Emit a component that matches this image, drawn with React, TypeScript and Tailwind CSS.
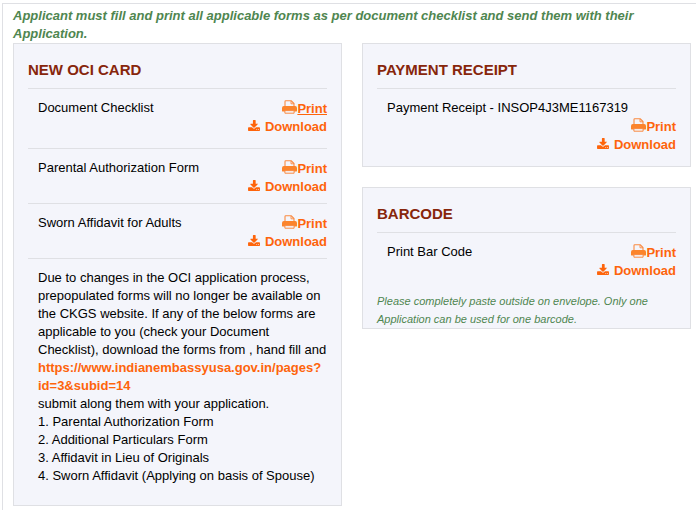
import React from 'react';

function PrintIcon() {
  return (
    <svg viewBox="0 0 15 14" className="-mt-1 h-[14px] w-[15px] shrink-0">
      <path d="M3 7V1.5Q3 .8 3.7 .8H9.3L12 3.5V7" fill="#f4f5fb" stroke="#f98a42" strokeWidth="1.1" />
      <path d="M9 1V3.8H12" fill="none" stroke="#f98a42" strokeWidth="0.9" />
      <path d="M1.8 6H13.2Q15 6.2 15 8V11Q15 11.4 14.6 11.4H.4Q0 11.4 0 11V8Q0 6.2 1.8 6Z" fill="#fb842c" />
      <path d="M2.9 10.6H12.1V13.2H2.9Z" fill="#f4f5fb" stroke="#f98a42" strokeWidth="1" />
    </svg>
  );
}

function DownloadIcon() {
  return (
    <svg viewBox="0 0 1664 1536" fill="#fe640b" className="mb-[3px] h-[11px] w-3 shrink-0">
      <path d="M1280 1344q0-26-19-45t-45-19-45 19-19 45 19 45 45 19 45-19 19-45zM1536 1344q0-26-19-45t-45-19-45 19-19 45 19 45 45 19 45-19 19-45zM1664 1120v320q0 40-28 68t-68 28h-1472q-40 0-68-28t-28-68v-320q0-40 28-68t68-28h465l135 136q58 56 136 56t136-56l136-136h464q40 0 68 28t28 68zM1339 551q17 41-14 70l-448 448q-18 19-45 19t-45-19l-448-448q-31-29-14-70 17-39 59-39h296v-448q0-26 19-45t45-19h256q26 0 45 19t19 45v448h296q42 0 59 39z" />
    </svg>
  );
}

function FormActions({ active = false }: { active?: boolean }) {
  return (
    <div className="flex flex-col items-end pt-px text-[13px] leading-[18px] font-bold text-[#fe640b]">
      <a className="flex items-center">
        <PrintIcon />
        <span className={active ? 'underline decoration-1 underline-offset-1' : ''}>Print</span>
      </a>
      <a className="flex items-center gap-[5px]">
        <DownloadIcon />
        <span>Download</span>
      </a>
    </div>
  );
}

function CardTitle({ text }: { text: string }) {
  return (
    <h2 className="border-b border-[#dfe0e4] pt-4 pb-2 text-[15px] leading-5 font-bold text-[#87260b]">
      {text}
    </h2>
  );
}

function FormRow({ name, className, active }: { name: string; className: string; active?: boolean }) {
  return (
    <div className={`flex justify-between border-b border-[#dfe0e4] pt-2.5 pl-2.5 ${className}`}>
      <p>{name}</p>
      <FormActions active={active} />
    </div>
  );
}

const card = 'border border-[#dfe0e4] bg-[#f4f5fb] px-[14px]';

export default function App() {
  return (
    <div className="h-[510px] w-[696px] overflow-hidden bg-white pt-[3px] font-['Liberation_Sans',Arial,sans-serif] text-[13px] leading-[18px] text-black">
      <div className="ml-[2px] h-[507px] border-t border-l border-[#dfe0e4] pl-[10px]">
        <p className="h-[39px] w-[650px] pt-[3px] font-bold text-[#4f8650] italic">
          Applicant must fill and print all applicable forms as per document checklist and send them with their
          <br />
          Application.
        </p>
        <div className="flex items-start gap-5">
          <section className={`h-[463px] w-[329px] ${card}`}>
            <CardTitle text="NEW OCI CARD" />
            <FormRow name="Document Checklist" className="h-[60px]" active />
            <FormRow name="Parental Authorization Form" className="h-[55px]" />
            <FormRow name="Sworn Affidavit for Adults" className="h-[55px]" />
            <div className="pt-2.5 pl-2.5 whitespace-nowrap">
              <p>Due to changes in the OCI application process,</p>
              <p>prepopulated forms will no longer be available on</p>
              <p>the CKGS website. If any of the below forms are</p>
              <p>applicable to you (check your Document</p>
              <p>Checklist), download the forms from , hand fill and</p>
              <a className="block font-bold text-[#fe640b]">
                https://www.indianembassyusa.gov.in/pages?
                <br />
                id=3&amp;subid=14
              </a>
              <p>submit along them with your application.</p>
              <p>1. Parental Authorization Form</p>
              <p>2. Additional Particulars Form</p>
              <p>3. Affidavit in Lieu of Originals</p>
              <p>4. Sworn Affidavit (Applying on basis of Spouse)</p>
            </div>
          </section>
          <div className="flex w-[329px] flex-col gap-5">
            <section className={`h-[124px] ${card}`}>
              <CardTitle text="PAYMENT RECEIPT" />
              <p className="pt-2.5 pl-2.5">Payment Receipt - INSOP4J3ME1167319</p>
              <FormActions />
            </section>
            <section className={`h-[142px] ${card}`}>
              <CardTitle text="BARCODE" />
              <div className="flex justify-between pt-2.5 pl-2.5">
                <p>Print Bar Code</p>
                <FormActions />
              </div>
              <p className="pt-3 text-[11px] leading-[18px] text-[#4f8650] italic">
                Please completely paste outside on envelope. Only one
                <br />
                Application can be used for one barcode.
              </p>
            </section>
          </div>
        </div>
      </div>
    </div>
  );
}
